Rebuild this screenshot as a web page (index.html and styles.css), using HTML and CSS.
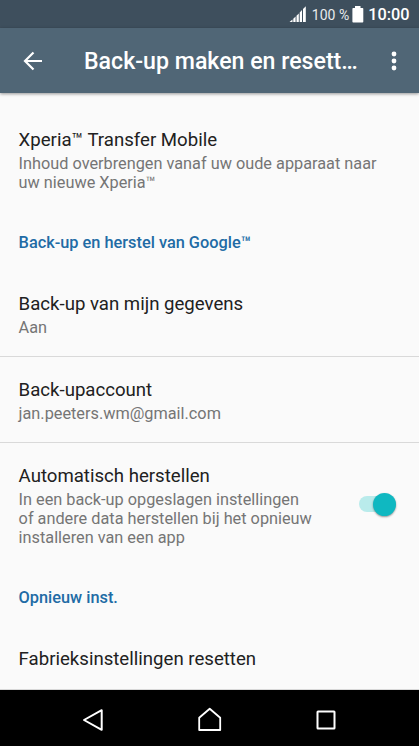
FILE: index.html
```html
<!DOCTYPE html>
<html lang="nl">
<head>
<meta charset="utf-8">
<title>Back-up maken en resetten</title>
<link rel="stylesheet" href="styles.css">
</head>
<body>
<div class="screen">
  <div class="status">
    <svg class="signal" width="18" height="18" viewBox="0 0 18 18" fill="#fff"><path d="M.5 17L3.500 14.500V17ZM4.300 13.800L6.600 11.500V17H4.300ZM7.500 10.800L9.800 8.500V17H7.500ZM10.700 7.400L13 5.100V17H10.700ZM14 4L16.800 1.200V17H14Z"/></svg>
    <span class="percent">100 %</span>
    <svg class="battery" width="12" height="18" viewBox="0 0 12 18" fill="#fff"><path d="M3 1H8.500V3H10.500Q11.300 3 11.300 3.800V16.700Q11.300 17.500 10.500 17.500H1.200Q.4 17.500 .4 16.700V3.800Q.4 3 1.200 3H3Z"/></svg>
    <span class="clock">10:00</span>
  </div>
  <header class="appbar">
    <svg class="back" width="20" height="20" viewBox="0 0 20 20" fill="none" stroke="#fff" stroke-width="2.200"><path d="M19 10H2.500M10.500 1.500L2 10L10.500 18.500"/></svg>
    <h1>Back-up maken en resett…</h1>
    <svg class="more" width="6" height="20" viewBox="0 0 6 20" fill="#fff"><circle cx="3" cy="3" r="2.400"/><circle cx="3" cy="10" r="2.400"/><circle cx="3" cy="17" r="2.400"/></svg>
  </header>
  <main class="list">
    <section class="row transfer">
      <h2>Xperia™ Transfer Mobile</h2>
      <p>Inhoud overbrengen vanaf uw oude apparaat naar<br>uw nieuwe Xperia™</p>
    </section>
    <h3>Back-up en herstel van Google™</h3>
    <section class="row divided">
      <h2>Back-up van mijn gegevens</h2>
      <p>Aan</p>
    </section>
    <section class="row divided">
      <h2>Back-upaccount</h2>
      <p>jan.peeters.wm@gmail.com</p>
    </section>
    <section class="row restore">
      <div>
        <h2>Automatisch herstellen</h2>
        <p>In een back-up opgeslagen instellingen<br>of andere data herstellen bij het opnieuw<br>installeren van een app</p>
      </div>
      <div class="switch"><div class="thumb"></div></div>
    </section>
    <h3>Opnieuw inst.</h3>
    <section class="row">
      <h2>Fabrieksinstellingen resetten</h2>
    </section>
  </main>
  <nav class="navbar">
    <svg width="24" height="26" viewBox="0 0 24 26" fill="none" stroke="#fff" stroke-width="2"><path d="M20.700 3.200V22.800L3 13Z" stroke-linejoin="round"/></svg>
    <svg width="24" height="26" viewBox="0 0 24 26" fill="none" stroke="#fff" stroke-width="1.800"><path d="M1.200 23V10.800L11.700 1.800L22.200 10.800V23Z" stroke-linejoin="round"/></svg>
    <svg width="24" height="26" viewBox="0 0 24 26" fill="none" stroke="#fff" stroke-width="2"><rect x="3.500" y="4.500" width="17" height="17" rx=".5"/></svg>
  </nav>
</div>
</body>
</html>
```
FILE: styles.css
```css
* { box-sizing: border-box; }
body {
  margin: 0;
  background: #fafafa;
  font-family: Roboto, "Liberation Sans", sans-serif;
}
h1, h2, h3, p { margin: 0; white-space: nowrap; }
svg { display: block; flex: none; }
.screen {
  width: 419px;
  height: 746px;
  display: flex;
  flex-direction: column;
  overflow: hidden;
}
.status {
  height: 28px;
  flex: none;
  display: flex;
  align-items: center;
  justify-content: flex-end;
  padding-right: 9.500px;
  background: #3e4f5d;
  color: #fff;
}
.percent {
  font-size: 14px;
  margin: 2px 3px 0 5px;
  color: #e8ebed;
}
.clock {
  font-size: 16.300px;
  font-weight: 500;
  margin: 1px 0 0 4px;
}
.appbar {
  height: 65px;
  flex: none;
  display: flex;
  align-items: center;
  padding: 0 22.500px 0 23px;
  background: #506676;
  color: #fff;
  box-shadow: 0 1px 3px rgba(0, 0, 0, .4);
}
.appbar h1 {
  margin-left: 41px;
  padding-top: 2px;
  font-size: 23.150px;
  line-height: 28px;
  font-weight: 500;
  flex: 1;
}
.list {
  height: 597px;
  flex: none;
  padding-top: 14px;
  border-bottom: 1px solid #d8d8d8;
}
.row { padding: 22px 19px 19px 18.600px; }
.row h2 {
  font-size: 18.630px;
  line-height: 22px;
  font-weight: 400;
  color: #212121;
}
.row p {
  margin-top: 3px;
  font-size: 16.290px;
  line-height: 19px;
  color: #757575;
}
.divided { border-bottom: 1px solid #d9d9d9; }
.list h3 {
  padding: 22px 19px 19px 18.600px;
  font-size: 16.330px;
  line-height: 19px;
  font-weight: 500;
  color: #216ba5;
}
.restore {
  display: flex;
  justify-content: space-between;
  align-items: center;
}
.switch {
  width: 37px;
  height: 16px;
  margin-right: 4px;
  border-radius: 8px;
  background: #b9ebeb;
  display: flex;
  align-items: center;
  justify-content: flex-end;
  margin-top: -4px;
}
.thumb {
  width: 23px;
  height: 23px;
  border-radius: 50%;
  background: #0fb8c1;
  box-shadow: 0 1px 2px rgba(0, 0, 0, .4);
}
.navbar {
  height: 56px;
  flex: none;
  display: flex;
  align-items: center;
  justify-content: space-between;
  padding: 4px 81px 0;
  background: #000;
}
```
